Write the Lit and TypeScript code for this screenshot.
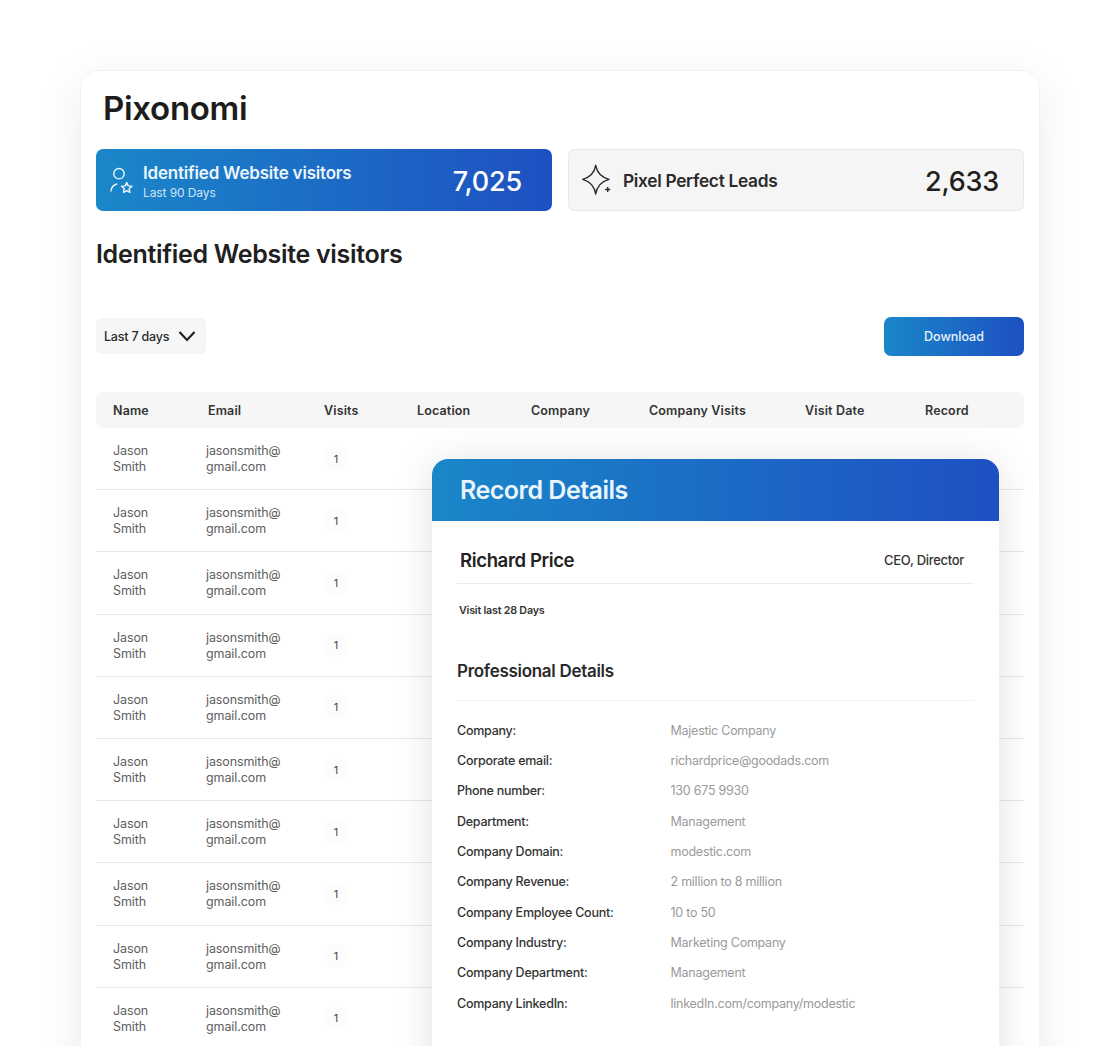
import { LitElement, html, css } from "lit";
import { customElement } from "lit/decorators.js";

const details: [string, string][] = [
  ["Company:", "Majestic Company"],
  ["Corporate email:", "richardprice@goodads.com"],
  ["Phone number:", "130 675 9930"],
  ["Department:", "Management"],
  ["Company Domain:", "modestic.com"],
  ["Company Revenue:", "2 million to 8 million"],
  ["Company Employee Count:", "10 to 50"],
  ["Company Industry:", "Marketing Company"],
  ["Company Department:", "Management"],
  ["Company LinkedIn:", "linkedIn.com/company/modestic"],
];
const headers = ["Name", "Email", "Visits", "Location", "Company", "Company Visits", "Visit Date", "Record"];

@customElement("app-root")
export class AppRoot extends LitElement {
  static styles = css`
    :host { display: block; height: 1046px; overflow: hidden; background: #fff; font-family: "Inter", "Liberation Sans", sans-serif; color: #1f1f1f; }
    .page { padding: 70px 80px 0; }
    .card { position: relative; height: 1100px; box-sizing: border-box; padding: 0 15px; background: #fff; border-radius: 18px; border: 1px solid #f3f3f3; box-shadow: 0 12px 50px rgba(0,0,0,.08); width: 960px; }
    h1 { margin: 0; padding: 17px 0 0 7px; height: 78px; box-sizing: border-box; font-size: 33px; line-height: 40px; font-weight: 600; letter-spacing: -.3px; color: #1c1c1c; }
    .stats { display: grid; grid-template-columns: 456px 456px; gap: 16px; }
    .stat { height: 62px; box-sizing: border-box; border-radius: 7px; display: flex; align-items: center; }
    .stat.blue { background: linear-gradient(90deg, #1a87c9, #1e50c2); color: #fff; padding: 2px 30px 0 14px; }
    .stat.grey { background: #f5f5f5; border: 1px solid #e9e9e9; padding: 2px 24px 0 13px; }
    .stat .txt { flex: 1; }
    .stat .t1 { font-size: 17px; line-height: 20px; font-weight: 600; letter-spacing: -.2px; color: #eaf4fb; }
    .stat .t2 { font-size: 12px; line-height: 15px; margin-top: 2px; color: #cfe4f5; letter-spacing: -.1px; }
    .stat.grey .t1 { color: #2a2a2a; font-size: 17.3px; font-weight: 600; letter-spacing: -.3px; }
    .stat .num { font-size: 27px; font-weight: 500; letter-spacing: -.2px; }
    .stat svg { flex: none; margin-top: -2px; }
    .person { margin-right: 3px; }
    .spark { margin-right: 11px; }
    h2 { margin: 0; padding-top: 27px; height: 106px; box-sizing: border-box; font-size: 25px; line-height: 32px; font-weight: 600; letter-spacing: -.3px; color: #202020; }
    .toolbar { display: flex; justify-content: space-between; align-items: center; height: 38px; }
    .select { width: 110px; height: 36px; box-sizing: border-box; background: #f6f6f6; border-radius: 5px; display: flex; align-items: center; gap: 9px; padding-left: 8px; font-size: 12.5px; font-weight: 500; letter-spacing: -.2px; color: #2a2a2a; }
    .btn { width: 140px; height: 39px; border-radius: 7px; background: linear-gradient(90deg, #1a87c9, #1e50c2); color: #e8f3fb; font-size: 12.5px; font-weight: 500; display: flex; align-items: center; justify-content: center; }
    .thead { margin-top: 37px; height: 36px; background: #f6f6f6; border-radius: 6px; display: grid; grid-template-columns: 95px 116px 93px 114px 118px 156px 120px auto; padding-left: 17px; align-items: center; font-size: 12.5px; font-weight: 600; letter-spacing: .15px; color: #333; }
    .row { height: 62.2px; box-sizing: border-box; border-bottom: 1px solid #e8e8e8; display: grid; grid-template-columns: 93px 118px 24px; padding: 0 0 0 17px; align-items: center; font-size: 12.5px; line-height: 16px; letter-spacing: -.1px; color: #5e5e5e; }
    .cell { padding-top: 1px; }
    .badge { width: 24px; height: 24px; border-radius: 50%; background: #fcfcfc; color: #444; display: flex; align-items: center; justify-content: center; font-size: 11px; opacity: .99; }
    .modal { position: absolute; left: 351px; top: 388px; width: 567px; height: 700px; background: #fff; border-radius: 16px 16px 0 0; box-shadow: 0 4px 40px rgba(0,0,0,.12); }
    .mhead { height: 62px; border-radius: 16px 16px 0 0; background: linear-gradient(90deg, #1a87c9, #1e50c2); display: flex; align-items: center; padding-left: 28px; color: #e9f5fc; font-size: 25px; font-weight: 600; letter-spacing: -.5px; }
    .mbody { padding: 0 25px; }
    .who { display: flex; justify-content: space-between; align-items: center; height: 63px; box-sizing: border-box; border-bottom: 1px solid #ececec; padding: 16px 10px 0 3px; }
    .who .n { font-size: 18.6px; font-weight: 600; letter-spacing: -.4px; color: #222; }
    .who .r { font-size: 13px; font-weight: 500; letter-spacing: -.3px; color: #333; }
    .visit { font-size: 10.7px; font-weight: 600; letter-spacing: -.2px; color: #333; height: 54px; padding: 20px 0 0 2px; box-sizing: border-box; line-height: 14px; }
    h3 { margin: 0; height: 63px; padding-top: 22px; box-sizing: border-box; border-bottom: 1px dotted #e4e4e4; font-size: 17px; line-height: 22px; font-weight: 600; letter-spacing: -.3px; color: #2a2a2a; }
    .dl { padding-top: 14px; }
    .d { display: grid; grid-template-columns: 213.5px 1fr; height: 30.33px; align-items: center; font-size: 12.5px; letter-spacing: -.25px; }
    .d .k { font-weight: 500; color: #333; }
    .d .v { color: #9a9a9a; }
  `;

  private personIcon() {
    return html`<svg class="person" width="30" height="32" viewBox="0 0 30 32" fill="none" stroke="#f0f7fc" stroke-width="1.4" stroke-linecap="round" stroke-linejoin="round">
      <circle cx="9" cy="9.7" r="5.2" />
      <path d="M1 27c.3-3.500 2.500-6 5.700-7" />
      <path d="M16.700 18.500l1.500 3.400 3.700.4-2.700 2.500.7 3.600-3.200-1.800-3.200 1.800.7-3.600-2.700-2.500 3.700-.4z" />
    </svg>`;
  }
  private sparkIcon() {
    return html`<svg class="spark" width="30" height="32" viewBox="0 0 30 32" fill="none" stroke="#2a2a2a" stroke-width="1.4" stroke-linejoin="round">
      <path d="M13.700 1.300C15 9 19 13 27 15.300 19 17.500 15 22 13.700 30 12.400 22 8.500 17.500.7 15.300 8.500 13 12.400 9 13.700 1.300z" />
      <path d="M25.700 23v5M23.200 25.500h5" />
    </svg>`;
  }

  render() {
    const rows = Array.from({ length: 10 });
    return html`<div class="page"><div class="card">
      <h1>Pixonomi</h1>
      <div class="stats">
        <div class="stat blue">${this.personIcon()}
          <div class="txt"><div class="t1">Identified Website visitors</div><div class="t2">Last 90 Days</div></div>
          <div class="num">7,025</div></div>
        <div class="stat grey">${this.sparkIcon()}
          <div class="txt"><div class="t1">Pixel Perfect Leads</div></div>
          <div class="num">2,633</div></div>
      </div>
      <h2>Identified Website visitors</h2>
      <div class="toolbar">
        <div class="select">Last 7 days
          <svg width="18" height="12" viewBox="0 0 18 12" fill="none" stroke="#222" stroke-width="2.2"><path d="M1.500 2l7.500 8 7.500-8"/></svg>
        </div>
        <div class="btn">Download</div>
      </div>
      <div class="thead">${headers.map((h) => html`<div>${h}</div>`)}</div>
      ${rows.map(() => html`<div class="row"><div class="cell">Jason<br />Smith</div><div class="cell">jasonsmith@<br />gmail.com</div><div class="badge">1</div></div>`)}
      <div class="modal">
        <div class="mhead">Record Details</div>
        <div class="mbody">
          <div class="who"><div class="n">Richard Price</div><div class="r">CEO, Director</div></div>
          <div class="visit">Visit last 28 Days</div>
          <h3>Professional Details</h3>
          <div class="dl">${details.map(([k, v]) => html`<div class="d"><div class="k">${k}</div><div class="v">${v}</div></div>`)}</div>
        </div>
      </div>
    </div></div>`;
  }
}
